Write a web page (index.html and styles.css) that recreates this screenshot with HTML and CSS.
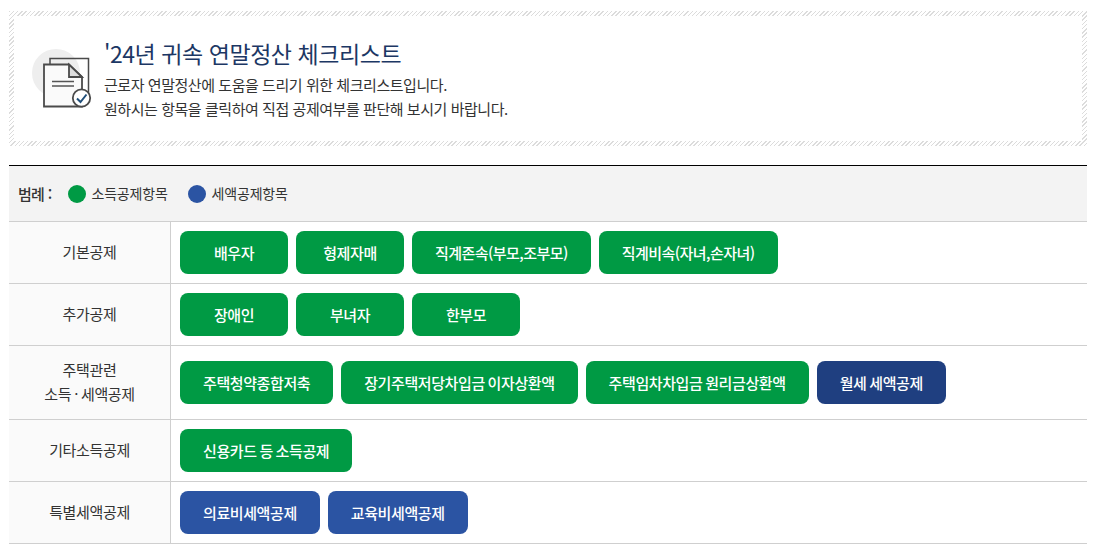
FILE: index.html
```html
<!DOCTYPE html>
<html lang="ko">
<head>
  <meta charset="UTF-8">
  <meta name="viewport" content="width=device-width, initial-scale=1.0">
  <title>'24년 귀속 연말정산 체크리스트</title>
  <link rel="stylesheet" href="styles.css">
</head>
<body>
<div class="intro">
  <div class="intro-in">
    <svg class="intro-icon" width="64" height="64" viewBox="0 0 64 64" fill="none">
      <circle cx="24" cy="24" r="24" fill="#eeeeee"/>
      <path d="M18 15V9.500H56.500V50" stroke="#4a4a4a" stroke-width="1.500"/>
      <path d="M12 15.500H37L50 28V57.500H12Z" fill="#fafafa" stroke="#4a4a4a" stroke-width="1.800"/>
      <path d="M37 15.500V28H50Z" fill="#dddddd" stroke="#4a4a4a" stroke-width="1.800"/>
      <path d="M20 32.500H42M20 37H42" stroke="#555555" stroke-width="1.500"/>
      <circle cx="49.500" cy="49" r="8.700" fill="#ffffff" stroke="#4a4a4a" stroke-width="1.800"/>
      <path d="M45 49.500L48.500 53L54.500 45.500" stroke="#1f4e79" stroke-width="2"/>
    </svg>
    <div class="intro-txt">
      <h1>'24년 귀속 연말정산 체크리스트</h1>
      <p>근로자 연말정산에 도움을 드리기 위한 체크리스트입니다.</p>
      <p>원하시는 항목을 클릭하여 직접 공제여부를 판단해 보시기 바랍니다.</p>
    </div>
  </div>
</div>

<div class="check">
  <div class="legend">
    <strong>범례 :</strong>
    <span class="leg"><i class="dot green"></i>소득공제항목</span>
    <span class="leg"><i class="dot blue"></i>세액공제항목</span>
  </div>
  <div class="row">
    <div class="th">기본공제</div>
    <div class="td">
      <a class="btn green">배우자</a>
      <a class="btn green">형제자매</a>
      <a class="btn green tight">직계존속(부모,조부모)</a>
      <a class="btn green tight">직계비속(자녀,손자녀)</a>
    </div>
  </div>
  <div class="row">
    <div class="th">추가공제</div>
    <div class="td">
      <a class="btn green">장애인</a>
      <a class="btn green">부녀자</a>
      <a class="btn green">한부모</a>
    </div>
  </div>
  <div class="row">
    <div class="th"><div>주택관련<br>소득<span class="sep">·</span>세액공제</div></div>
    <div class="td">
      <a class="btn green">주택청약종합저축</a>
      <a class="btn green">장기주택저당차입금 이자상환액</a>
      <a class="btn green">주택임차차입금 원리금상환액</a>
      <a class="btn navy">월세 세액공제</a>
    </div>
  </div>
  <div class="row">
    <div class="th">기타소득공제</div>
    <div class="td">
      <a class="btn green">신용카드 등 소득공제</a>
    </div>
  </div>
  <div class="row">
    <div class="th">특별세액공제</div>
    <div class="td">
      <a class="btn blue">의료비세액공제</a>
      <a class="btn blue">교육비세액공제</a>
    </div>
  </div>
</div>
</body>
</html>
```

FILE: styles.css
```css
html,body{
  margin: 0;
  background: #fff;
}
body{
  padding: 11px 15px 0 9px;
  font-family: "Noto Sans CJK KR", "Noto Sans", sans-serif;
  color: #333;
  font-size: 15px;
  letter-spacing: -0.35px;
}
.intro{
  height: 135px;
  box-sizing: border-box;
  padding: 5px;
  background: repeating-linear-gradient(135deg, #dcdcdc 0 1px, #fff 1px 3px);
}
.intro-in{
  height: 100%;
  background: #fff;
  display: flex;
  align-items: center;
  padding-left: 18px;
  gap: 8px;
}
.intro-icon{
  flex: none;
  margin-top: 4px;
}
.intro-txt{
  margin-top: 1px;
}
.intro-txt h1{
  margin: 0 0 4px;
  font-size: 23px;
  line-height: 32px;
  font-weight: 400;
  color: #1c3764;
  letter-spacing: -0.45px;
}
.intro-txt p{
  margin: 0;
  line-height: 24px;
  letter-spacing: -0.45px;
}
.check{
  margin-top: 19px;
  border-top: 1px solid #000;
}
.legend{
  height: 55px;
  box-sizing: border-box;
  padding: 0 0 1px 9px;
  background: #f3f3f3;
  display: flex;
  align-items: center;
  font-size: 14px;
  letter-spacing: -0.2px;
}
.legend strong{
  font-weight: 500;
  font-size: 15px;
  letter-spacing: -0.7px;
  margin-right: 16px;
}
.leg{
  display: flex;
  align-items: center;
  gap: 6px;
  margin-right: 20px;
}
.dot{
  width: 18px;
  height: 18px;
  margin-top: 1px;
  border-radius: 50%;
}
.dot.green{ background: #009a44; }
.dot.blue{ background: #2b54a3; }
.row{
  display: flex;
  border-top: 1px solid #cfcfcf;
}
.row:last-child{
  border-bottom: 1px solid #cfcfcf;
}
.th{
  width: 162px;
  flex: none;
  box-sizing: border-box;
  background: #fafafa;
  border-right: 1px solid #cfcfcf;
  display: flex;
  align-items: center;
  justify-content: center;
  text-align: center;
  line-height: 24px;
  padding: 12px 0 13px;
}
.sep{
  margin: 0 3px;
}
.td{
  flex: 1;
  display: flex;
  align-items: center;
  gap: 8px;
  padding: 9px;
}
.btn{
  min-width: 108px;
  height: 43px;
  box-sizing: border-box;
  padding: 0 23px 1px;
  border-radius: 8px;
  display: flex;
  align-items: center;
  justify-content: center;
  color: #fff;
  font-weight: 500;
  white-space: nowrap;
  letter-spacing: -0.4px;
  word-spacing: -1px;
}
.btn.tight{ letter-spacing: -0.55px; }
.btn.green{ background: #009a44; }
.btn.blue{ background: #2b54a3; }
.btn.navy{ background: #1f3f80; }
```
